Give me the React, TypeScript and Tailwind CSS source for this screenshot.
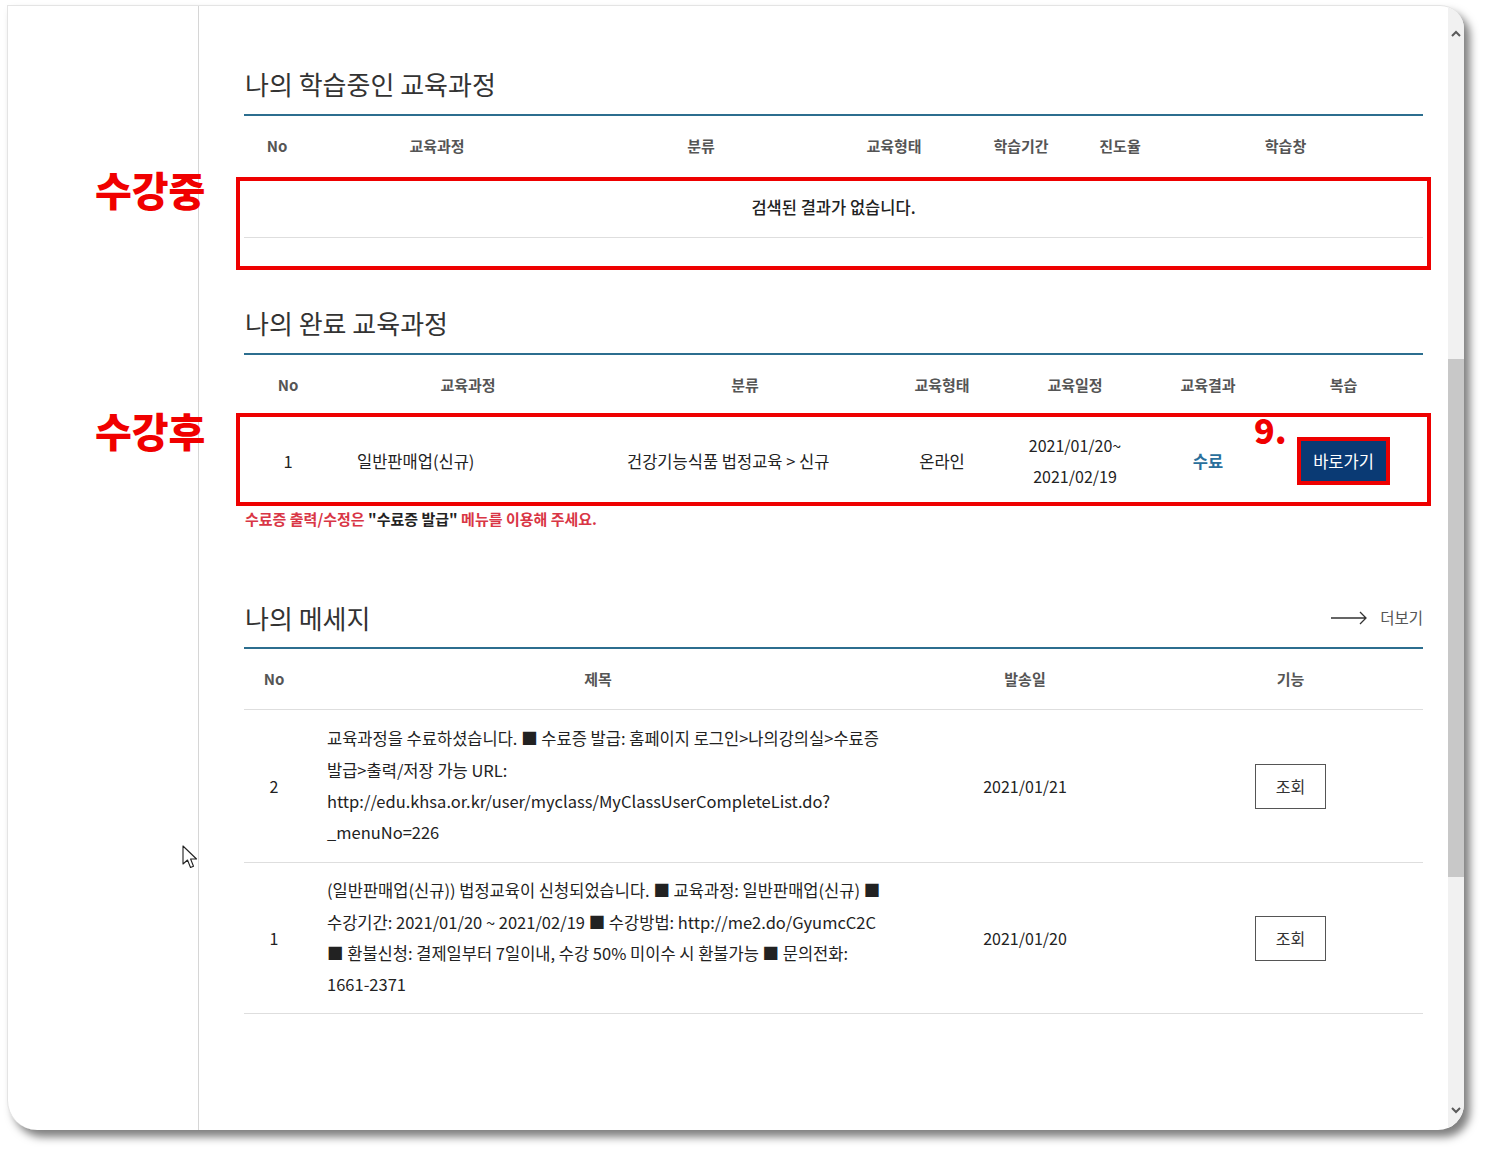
import React from 'react';

const cols1 = 'grid grid-cols-[66px_254px_274px_112px_142px_56px_275px]';
const cols2 = 'grid grid-cols-[88px_272px_282px_112px_154px_112px_159px]';
const cols3 = 'grid grid-cols-[60px_588px_266px_265px]';

function Heading({ children, right }: { children: React.ReactNode; right?: React.ReactNode }) {
  return (
    <div className="flex items-center justify-between border-b-2 border-[#2c6e8f] pb-[14px]">
      <h2 className="pl-[1px] text-[26px] leading-[32px] font-normal text-[#333]">{children}</h2>
      {right}
    </div>
  );
}

function HeadCell({ children }: { children: React.ReactNode }) {
  return <div className="text-center text-[15px] font-bold text-[#555]">{children}</div>;
}

const messages = [
  {
    no: '2',
    date: '2021/01/21',
    lines: [
      '교육과정을 수료하셨습니다. ■ 수료증 발급: 홈페이지 로그인>나의강의실>수료증',
      '발급>출력/저장 가능 URL:',
      'http://edu.khsa.or.kr/user/myclass/MyClassUserCompleteList.do?',
      '_menuNo=226',
    ],
    h: 'h-[153px]',
  },
  {
    no: '1',
    date: '2021/01/20',
    lines: [
      '(일반판매업(신규)) 법정교육이 신청되었습니다. ■ 교육과정: 일반판매업(신규) ■',
      '수강기간: 2021/01/20 ~ 2021/02/19 ■ 수강방법: http://me2.do/GyumcC2C',
      '■ 환불신청: 결제일부터 7일이내, 수강 50% 미이수 시 환불가능 ■ 문의전화:',
      '1661-2371',
    ],
    h: 'h-[151px]',
  },
];

function Chevron({ up }: { up?: boolean }) {
  return (
    <svg width="10" height="7" viewBox="0 0 10 7" className="mx-auto">
      <path d={up ? 'M1 6 L5 2 L9 6' : 'M1 1 L5 5 L9 1'} fill="none" stroke="#5a5a5a" strokeWidth="2" />
    </svg>
  );
}

export default function App() {
  return (
    <div className="relative w-[1492px] h-[1159px] overflow-hidden bg-white pl-[7px] pt-[5px] font-['Noto_Sans_CJK_KR','Noto_Sans',sans-serif] text-[#222]">
      {/* window frame */}
      <div className="flex w-[1457px] h-[1125px] overflow-hidden rounded-tr-[24px] rounded-br-[26px] rounded-bl-[30px] border-l border-t border-[#e4e4e4] bg-white shadow-[6px_7px_9px_rgba(0,0,0,0.5)]">
        <aside className="w-[191px] shrink-0 border-r border-[#d6d6d6]" />

        <main className="flex-1 pl-[45px] pr-[25px] pt-[62px]">
          {/* 학습중 */}
          <section>
            <Heading>나의 학습중인 교육과정</Heading>
            <div className={`${cols1} h-[61px] items-center`}>
              <HeadCell>No</HeadCell>
              <HeadCell>교육과정</HeadCell>
              <HeadCell>분류</HeadCell>
              <HeadCell>교육형태</HeadCell>
              <HeadCell>학습기간</HeadCell>
              <HeadCell>진도율</HeadCell>
              <HeadCell>학습창</HeadCell>
            </div>
            <div className="flex h-[61px] items-center justify-center border-b border-[#dedede] text-[16.5px] font-medium text-[#222]">
              검색된 결과가 없습니다.
            </div>
          </section>

          {/* 완료 */}
          <section className="mt-[69px]">
            <Heading>나의 완료 교육과정</Heading>
            <div className={`${cols2} h-[61px] items-center`}>
              <HeadCell>No</HeadCell>
              <HeadCell>교육과정</HeadCell>
              <HeadCell>분류</HeadCell>
              <HeadCell>교육형태</HeadCell>
              <HeadCell>교육일정</HeadCell>
              <HeadCell>교육결과</HeadCell>
              <HeadCell>복습</HeadCell>
            </div>
            <div className={`${cols2} h-[90px] items-center text-[16.5px]`}>
              <div className="text-center">1</div>
              <div className="pl-[25px]">일반판매업(신규)</div>
              <div className="pl-[23px]">건강기능식품 법정교육 &gt; 신규</div>
              <div className="text-center">온라인</div>
              <div className="text-center text-[16px] leading-[31px]">
                2021/01/20~
                <br />
                2021/02/19
              </div>
              <div className="text-center font-bold text-[#2a6f9c]">수료</div>
              <div className="flex justify-center">
                <button className="h-[40px] w-[85px] bg-[#0a3a74] text-[16.5px] text-white outline-4 outline-[#ee0000]">
                  바로가기
                </button>
              </div>
            </div>
            <p className="mt-[3px] pl-[1px] text-[15px] leading-[20px] font-semibold text-[#d93645]">
              수료증 출력/수정은 <span className="text-[#222]">"수료증 발급"</span> 메뉴를 이용해 주세요.
            </p>
          </section>

          {/* 메세지 */}
          <section className="mt-[73px]">
            <div className="flex items-center justify-between border-b-2 border-[#2c6e8f] pb-[13px]">
              <h2 className="pl-[1px] text-[26px] leading-[32px] font-normal text-[#333]">나의 메세지</h2>
              <div className="flex items-center gap-[12px] text-[15.5px] text-[#555]">
                <svg width="37" height="14" viewBox="0 0 37 14">
                  <path d="M0 7 H35 M29 1 L35 7 L29 13" fill="none" stroke="#333" strokeWidth="1.3" />
                </svg>
                <span>더보기</span>
              </div>
            </div>
            <div className={`${cols3} h-[61px] items-center border-b border-[#dedede]`}>
              <HeadCell>No</HeadCell>
              <HeadCell>제목</HeadCell>
              <HeadCell>발송일</HeadCell>
              <HeadCell>기능</HeadCell>
            </div>
            {messages.map(m => (
              <div key={m.no} className={`${cols3} ${m.h} items-center border-b border-[#dedede] text-[16.5px]`}>
                <div className="text-center text-[16px]">{m.no}</div>
                <div className="pl-[23px] leading-[31.4px] whitespace-nowrap">
                  {m.lines.map(l => (
                    <div key={l}>{l}</div>
                  ))}
                </div>
                <div className="text-center text-[16px]">{m.date}</div>
                <div className="flex justify-center">
                  <button className="h-[45px] w-[71px] border border-[#555] bg-white text-[16px] text-[#333]">조회</button>
                </div>
              </div>
            ))}
          </section>
        </main>

        {/* scrollbar */}
        <div className="flex w-[16px] shrink-0 flex-col bg-[#f1f1f1] pt-[24px] pb-[16px]">
          <Chevron up />
          <div className="mt-[322px] h-[518px] bg-[#c8c8c8]" />
          <div className="flex-1" />
          <Chevron />
        </div>
      </div>

      {/* annotations */}
      <div className="absolute left-[236px] top-[177px] h-[93px] w-[1195px] border-4 border-[#ee0000]" />
      <div className="absolute left-[236px] top-[413px] h-[93px] w-[1195px] border-4 border-[#ee0000]" />
      <div className="absolute left-[95px] top-[165px] text-[40px] leading-[48px] font-black text-[#f00000]">수강중</div>
      <div className="absolute left-[95px] top-[406px] text-[40px] leading-[48px] font-black text-[#f00000]">수강후</div>
      <div className="absolute left-[1254px] top-[412px] text-[34px] leading-[36px] font-black text-[#f00000]">9.</div>

      {/* mouse cursor */}
      <svg className="absolute left-[182px] top-[845px]" width="17" height="25" viewBox="0 0 17 25">
        <path d="M1 1 L1 19 L5.5 15 L8.5 22.5 L11.5 21.3 L8.6 14 L14.5 14 Z" fill="#fff" stroke="#222" strokeWidth="1.1" strokeLinejoin="round" />
      </svg>
    </div>
  );
}
